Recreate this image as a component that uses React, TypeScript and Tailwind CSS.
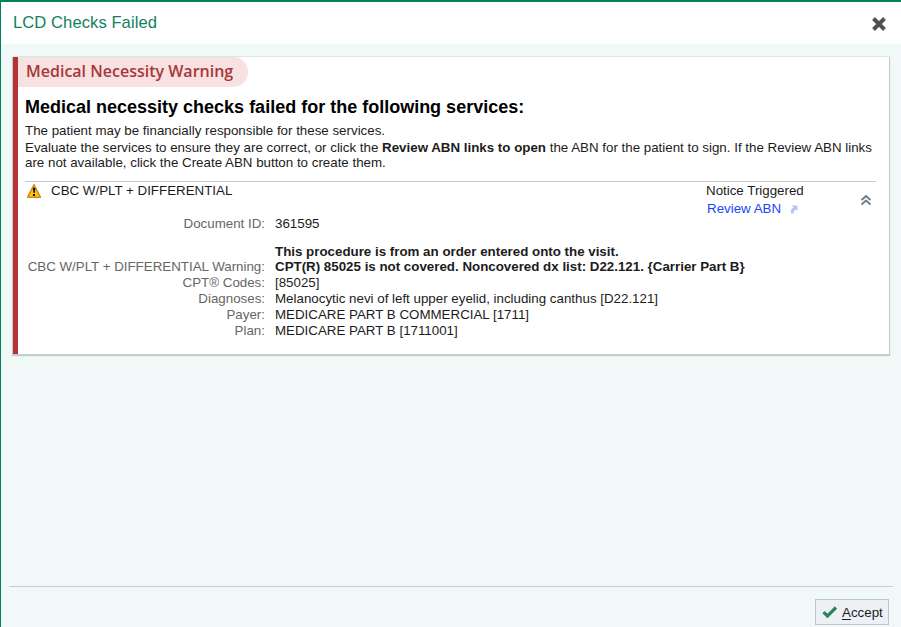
import type { ReactNode } from "react";

function WarningIcon() {
  return (
    <svg width="16" height="16" viewBox="0 0 16 16">
      <path d="M8 1.800 L14.300 14.200 H1.700 Z" fill="#ffc400" stroke="#cf8e1c" strokeWidth="1.600" strokeLinejoin="round" />
      <path d="M7 4.700h2.200v1.600l-.5 3.700H7.500L7 6.300z" fill="#111" />
      <rect x="7" y="11" width="2" height="2" fill="#111" />
    </svg>
  );
}

function Row({ label, children, strong }: { label: string; children: ReactNode; strong?: boolean }) {
  return (
    <div className="flex h-4 items-center">
      <div className="w-[240px] text-right text-[#666]">{label}</div>
      <div className={strong ? "ml-[10px] font-bold" : "ml-[10px]"}>{children}</div>
    </div>
  );
}

export default function App() {
  return (
    <div className="flex h-[627px] w-[901px] flex-col overflow-hidden border-l border-t-2 border-[#00805f] bg-[#f0f9f7] font-['Liberation_Sans',Arial,sans-serif] text-[13.33px] leading-4 whitespace-nowrap text-[#1c1c1c]">
      <header className="flex h-[42px] shrink-0 items-start justify-between bg-white pl-3 pr-[14px]">
        <h1 className="pt-[11px] text-[16.6px] leading-[20px] tracking-[0.06px] text-[#12805f]">LCD Checks Failed</h1>
        <button className="mt-[14px]" aria-label="Close">
          <svg width="16" height="16" viewBox="0 0 16 16">
            <path d="M2.500 2.500 L13.500 13.500 M13.500 2.500 L2.500 13.500" stroke="#505050" strokeWidth="3.900" />
          </svg>
        </button>
      </header>

      <main className="ml-3 mt-[13px] flex h-[297px] w-[876px] shrink-0 border-l-[5px] border-[#b53336] bg-white shadow-[0_-1px_0_0_#dce6e3,-1px_0_0_0_#c4cecb,0_1px_1px_1px_#c4cecb]">
        <div className="flex w-full flex-col">
          <div className="flex h-[30px] w-[230px] shrink-0 items-center rounded-r-full bg-[#f7e1e1] pb-0.5 pl-2 font-['Open_Sans','Noto_Sans',sans-serif] text-[16px] font-semibold text-[#a8373a]">
            Medical Necessity Warning
          </div>
          <div className="flex flex-col pl-[7px] pr-[13px]">
            <h2 className="mt-[10px] text-[18px] leading-5 font-bold text-black">Medical necessity checks failed for the following services:</h2>
            <p className="mt-[6px]">The patient may be financially responsible for these services.</p>
            <p className="mt-px h-[15px]">
              Evaluate the services to ensure they are correct, or click the <b>Review ABN links to open</b> the ABN for the patient to sign. If the Review ABN links
            </p>
            <p>are not available, click the Create ABN button to create them.</p>
            <div className="mt-[10px] flex h-[35px] items-start border-t border-[#c8cccb]">
              <span className="ml-px mt-px"><WarningIcon /></span>
              <span className="ml-[9px] mt-px w-[655px]">CBC W/PLT + DIFFERENTIAL</span>
              <div className="w-[154px] pt-px">
                <div>Notice Triggered</div>
                <a className="mt-0.5 ml-px flex items-center text-[#1947f5]">
                  Review ABN
                  <svg className="ml-[9px]" width="8" height="9" viewBox="0 0 8 9">
                    <path d="M1.500 .5h6V6L5.600 4.400C4.200 5.200 3.500 6.200 3.500 8.500H1C.2 5.600 1.500 3.700 3.500 2.500z" fill="#b4c6f8" />
                  </svg>
                </a>
              </div>
              <svg className="mt-3" width="12" height="12" viewBox="0 0 12 12" fill="none" stroke="#6b7b88" strokeWidth="1.800">
                <path d="M1.500 6 L6 2 L10.500 6 M1.500 10.500 L6 6.500 L10.500 10.500" />
              </svg>
            </div>
            <div className="flex flex-col">
              <Row label="Document ID:">361595</Row>
              <div className="h-3" />
              <Row label="" strong>This procedure is from an order entered onto the visit.</Row>
              <div className="-mt-px"><Row label="CBC W/PLT + DIFFERENTIAL Warning:" strong>CPT(R) 85025 is not covered. Noncovered dx list: D22.121. {"{Carrier Part B}"}</Row></div>
              <Row label="CPT® Codes:">[85025]</Row>
              <Row label="Diagnoses:">Melanocytic nevi of left upper eyelid, including canthus [D22.121]</Row>
              <Row label="Payer:">MEDICARE PART B COMMERCIAL [1711]</Row>
              <Row label="Plan:">MEDICARE PART B [1711001]</Row>
            </div>
          </div>
        </div>
      </main>

      <footer className="mt-auto mr-2 ml-2 flex h-[41px] shrink-0 items-start justify-end border-t border-[#c9cfcd] pt-3 pr-1">
        <button className="flex h-[26px] w-[74px] items-center border border-[#bfc5cf] bg-[#edf0f4] pl-1.5">
          <svg width="16" height="14" viewBox="0 0 16 14">
            <path d="M1.500 7.200 L5.500 11 L14 2.500" fill="none" stroke="#2c855d" strokeWidth="3.200" />
          </svg>
          <span className="ml-[4px] pt-px"><span className="underline underline-offset-2">A</span>ccept</span>
        </button>
      </footer>
    </div>
  );
}
